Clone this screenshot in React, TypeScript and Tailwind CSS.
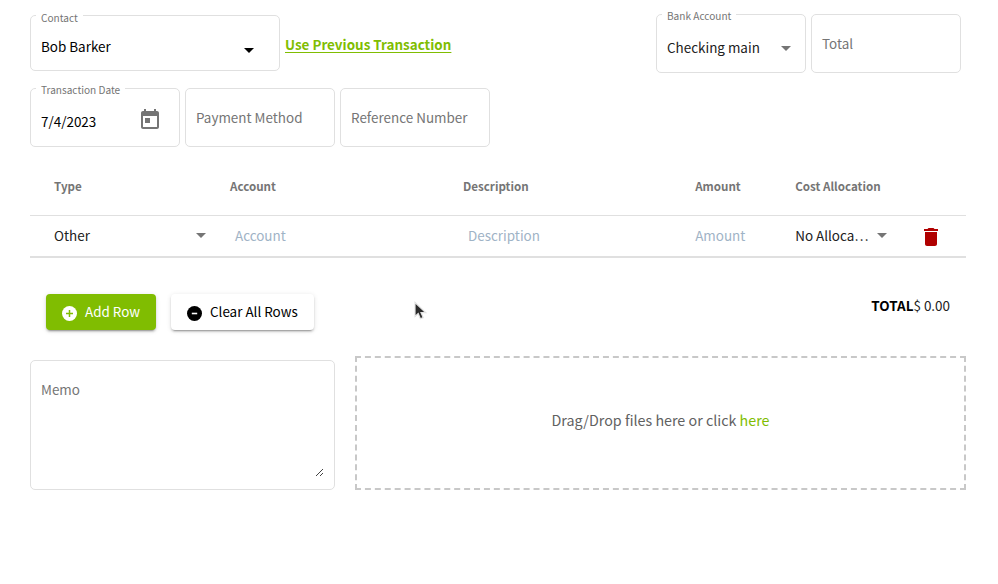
import type { ReactNode } from "react";

function Field({
  label,
  labelTop = "-top-[7px]",
  className,
  children,
}: {
  label?: string;
  labelTop?: string;
  className: string;
  children: ReactNode;
}) {
  return (
    <div className={`relative flex shrink-0 rounded-[5px] border border-[#e0e0e0] pl-[10px] ${className}`}>
      {label && (
        <span className={`absolute left-[5px] bg-white px-[5px] text-[10.08px] leading-[16px] text-[#757575] ${labelTop}`}>
          {label}
        </span>
      )}
      {children}
    </div>
  );
}

function Caret({ className }: { className: string }) {
  return (
    <svg viewBox="0 0 10 5" className={`h-[5px] w-[10px] shrink-0 ${className}`}>
      <path d="M0 0h10L5 5z" fill="currentColor" />
    </svg>
  );
}

export default function App() {
  return (
    <div className="relative h-[584px] w-[998px] overflow-hidden bg-white font-['Noto_Sans_CJK_SC',sans-serif] text-[13.44px] leading-[20px] whitespace-nowrap">
      <div className="flex pt-[14px] pl-[30px]">
        <Field label="Contact" labelTop="-top-[6px]" className="mt-px h-[56px] w-[250px] justify-between pt-[20px] pr-[25px] text-black">
          <span>Bob Barker</span>
          <Caret className="mt-[12px]" />
        </Field>
        <a className="mt-[20px] ml-[5px] h-[20px] w-[371px] font-bold text-[#80bd01] underline decoration-1 underline-offset-2">
          Use Previous Transaction
        </a>
        <Field label="Bank Account" className="h-[59px] w-[150px] justify-between pt-[22px] pr-[14px] text-[#212121]">
          <span>Checking main</span>
          <Caret className="mt-[9px] text-[#757575]" />
        </Field>
        <Field className="ml-[5px] h-[59px] w-[150px] pt-[18px] text-[#757575]">Total</Field>
      </div>

      <div className="mt-[15px] flex gap-[5px] pl-[30px]">
        <Field label="Transaction Date" className="h-[59px] w-[150px] justify-between pt-[22px] pr-[17px] text-black">
          <span>7/4/2023</span>
          <svg viewBox="0 0 24 24" className="-mt-[3px] size-[24px] text-[#757575]">
            <path
              fill="currentColor"
              d="M19 3h-1V1h-2v2H8V1H6v2H5c-1.1 0-2 .9-2 2v14c0 1.1.9 2 2 2h14c1.1 0 2-.9 2-2V5c0-1.1-.9-2-2-2zm0 16H5V8h14v11zM7 10h5v5H7z"
            />
          </svg>
        </Field>
        <Field className="h-[59px] w-[150px] pt-[18px] text-[#757575]">Payment Method</Field>
        <Field className="h-[59px] w-[150px] pt-[18px] text-[#757575]">Reference Number</Field>
      </div>

      <div className="mt-[10px] ml-[30px] w-[936px]">
        <div className="flex h-[59px] border-b border-[#e0e0e0] pt-[19px] pl-[24px] text-[11.6px] font-bold text-[#757575]">
          <span className="w-[176px]">Type</span>
          <span className="w-[233px]">Account</span>
          <span className="w-[232.2px]">Description</span>
          <span className="w-[100px]">Amount</span>
          <span>Cost Allocation</span>
        </div>
        <div className="flex h-[42px] border-b-2 border-[#e0e0e0] pt-[9px] pl-[24px] text-[#9fb3c6]">
          <div className="flex w-[181px] text-[#212121]">
            <span className="w-[142px]">Other</span>
            <Caret className="mt-[8px] text-[#757575]" />
          </div>
          <span className="w-[233px]">Account</span>
          <span className="w-[227.2px]">Description</span>
          <span className="w-[100px]">Amount</span>
          <div className="flex w-[123.8px] text-[#212121]">
            <span className="w-[81.8px]">No Alloca…</span>
            <Caret className="mt-[8px] text-[#757575]" />
          </div>
          <svg viewBox="0 0 24 24" className="size-[24px] text-[#b00000]">
            <path fill="currentColor" d="M6 19c0 1.1.9 2 2 2h8c1.1 0 2-.9 2-2V7H6v12zM19 4h-3.5l-1-1h-5l-1 1H5v2h14V4z" />
          </svg>
        </div>
      </div>

      <div className="mt-[36px] flex h-[36px] pl-[46px]">
        <button className="flex w-[110px] items-start rounded-[4px] bg-[#80bd01] pt-[7px] pl-[16px] text-white shadow-[0_3px_1px_-2px_rgba(0,0,0,0.2),0_2px_2px_0_rgba(0,0,0,0.14),0_1px_5px_0_rgba(0,0,0,0.12)]">
          <svg viewBox="0 0 15 15" className="mt-[5px] mr-[8px] size-[15px]">
            <circle cx="7.5" cy="7.5" r="7.5" fill="white" />
            <path d="M7.5 4v7M4 7.5h7" stroke="#80bd01" strokeWidth="1.5" />
          </svg>
          Add Row
        </button>
        <button className="ml-[15px] flex w-[143px] items-start rounded-[4px] bg-white pt-[7px] pl-[16px] text-black shadow-[0_3px_1px_-2px_rgba(0,0,0,0.2),0_2px_2px_0_rgba(0,0,0,0.14),0_1px_5px_0_rgba(0,0,0,0.12)]">
          <svg viewBox="0 0 15 15" className="mt-[5px] mr-[8px] size-[15px]">
            <circle cx="7.5" cy="7.5" r="7.5" fill="black" />
            <path d="M4.8 7.5h5.4" stroke="white" strokeWidth="1.6" />
          </svg>
          Clear All Rows
        </button>
        <div className="mt-px ml-auto flex pr-[48px] text-[#212121]">
          <b className="text-black">TOTAL</b>
          <span>$ 0.00</span>
        </div>
      </div>

      <div className="mt-[26px] flex pl-[30px]">
        <div className="mt-[4px] mr-[20px] flex h-[130px] w-[305px] justify-between rounded-[5px] border border-[#e0e0e0] pt-[18px] pr-[11px] pl-[10px] text-[#757575]">
          <span>Memo</span>
          <svg viewBox="0 0 8 8" className="mt-[90px] size-[8px]" shapeRendering="crispEdges">
            <path d="M0.5 7.5l7-7M4.5 7.5l3-3" stroke="#444" />
          </svg>
        </div>
        <div className="flex h-[134px] w-[611px] items-start justify-center border-2 border-dashed border-[#c8c8c8] pt-[52px] text-[14.3px] text-[#616161]">
          <span>
            Drag/Drop files here or click <a className="text-[#80bd01]">here</a>
          </span>
        </div>
      </div>

      <svg viewBox="0 0 14 21" className="absolute top-[300px] left-[413px] h-[21px] w-[14px]">
        <path
          d="M2 2.5v14l3.2-2.9 2.2 5.2 2.8-1.2-2.2-5h4.6z"
          fill="#2b2b2b"
          stroke="#e4e4e4"
          strokeWidth="1.2"
        />
      </svg>
    </div>
  );
}
